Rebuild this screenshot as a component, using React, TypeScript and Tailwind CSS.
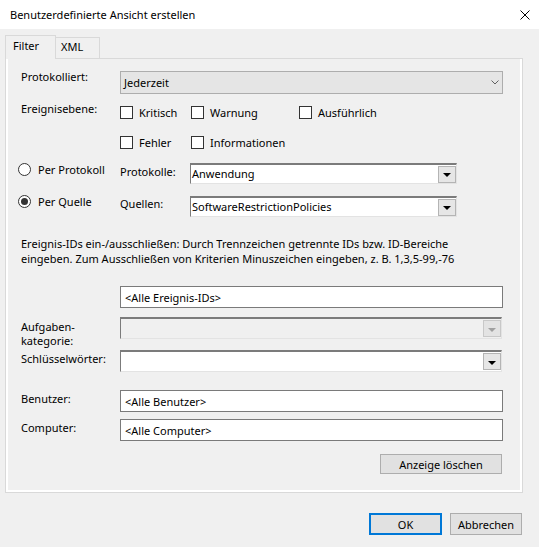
import React from "react";

function Checkbox({ label, className = "" }: { label: string; className?: string }) {
  return (
    <div className={"flex items-center " + className}>
      <div className="w-[13px] h-[13px] border border-[#333333] bg-white shrink-0" />
      <span className="ml-[6px] whitespace-nowrap">{label}</span>
    </div>
  );
}

function Radio({ label, checked = false }: { label: string; checked?: boolean }) {
  return (
    <div className="flex items-center -ml-[3px]">
      <div className="w-[13px] h-[13px] rounded-full border border-[#333333] bg-white flex items-center justify-center shrink-0">
        {checked && <div className="w-[7px] h-[7px] rounded-full bg-[#333333]" />}
      </div>
      <span className="ml-[7px] whitespace-nowrap">{label}</span>
    </div>
  );
}

function ClassicCombo({
  value = "",
  className = "",
  disabled = false,
}: {
  value?: string;
  className?: string;
  disabled?: boolean;
}) {
  return (
    <div
      className={
        "flex items-center border-t-2 border-l border-r border-b border-t-[#7b7b7b] border-l-[#7b7b7b] border-r-[#e3e3e3] border-b-[#e3e3e3] " +
        (disabled ? "bg-[#f0f0f0] " : "bg-white ") +
        className
      }
    >
      <span className="flex-1 pl-[1px] -mt-[1px] whitespace-nowrap overflow-hidden">{value}</span>
      <div
        className={
          "w-[18px] h-[17px] flex items-center justify-center border shrink-0 " +
          (disabled ? "border-[#c8c8c8] bg-[#e3e3e3]" : "border-[#b4b4b4] bg-[#e6e6e6]")
        }
      >
        <div
          className={
            "w-0 h-0 border-l-[4px] border-r-[4px] border-t-[4px] border-l-transparent border-r-transparent mt-[2px] " +
            (disabled ? "border-t-[#a0a0a0]" : "border-t-black")
          }
        />
      </div>
    </div>
  );
}

function TextBox({ value, className = "" }: { value: string; className?: string }) {
  return (
    <div className={"flex items-center bg-white border border-[#7a7a7a] pl-[4px] whitespace-nowrap " + className}>
      {value}
    </div>
  );
}

export default function App() {
  return (
    <div className="w-[539px] h-[547px] bg-[#f0f0f0] font-['Noto_Sans',sans-serif] text-[11px] leading-[15px] text-black flex flex-col overflow-hidden">
      {/* Title bar */}
      <div className="h-[29px] bg-white flex items-center justify-between shrink-0">
        <span className="pl-[10px]">Benutzerdefinierte Ansicht erstellen</span>
        <svg className="mr-[9px]" width="10" height="10" viewBox="0 0 10 10">
          <path d="M0.5 0.5 L9.5 9.5 M9.5 0.5 L0.5 9.5" stroke="#000" strokeWidth="1" fill="none" />
        </svg>
      </div>

      {/* Tabs */}
      <div className="mt-[6px] flex items-end h-[23px] pl-[5px] relative z-10 shrink-0">
        <div className="w-[51px] h-[24px] -mb-px border border-b-0 border-[#d9d9d9] bg-[#f0f0f0] pl-[7px] pt-[2px]">
          Filter
        </div>
        <div className="w-[44px] h-[21px] border-t border-r border-[#d9d9d9] pl-[5px] pt-[1px]">XML</div>
      </div>

      {/* Panel */}
      <div className="ml-[5px] w-[518px] h-[435px] shrink-0 border border-[#d9d9d9] bg-[#f0f0f0] shadow-[inset_2px_0_0_#ffffff,inset_-2px_0_0_#ffffff,inset_0_-2px_0_#ffffff] pl-[15px] pt-[12px] flex flex-col">
        {/* Protokolliert */}
        <div className="flex h-[23px]">
          <div className="w-[99px] -mt-[2px]">Protokolliert:</div>
          <div className="w-[383px] h-[23px] bg-[#e5e5e5] border border-[#adadad] flex items-center justify-between pl-[3px] pr-[3px]">
            <span>Jederzeit</span>
            <svg width="8" height="5" viewBox="0 0 8 5">
              <path d="M0.5 0.5 L4 4 L7.5 0.5" stroke="#606060" strokeWidth="1" fill="none" />
            </svg>
          </div>
        </div>

        {/* Ereignisebene row 1 */}
        <div className="flex h-[20px] mt-[8px] items-center">
          <div className="w-[99px] self-start -mt-[1px]">Ereignisebene:</div>
          <Checkbox label="Kritisch" className="w-[71px]" />
          <Checkbox label="Warnung" className="w-[108px]" />
          <Checkbox label="Ausführlich" />
        </div>

        {/* Ereignisebene row 2 */}
        <div className="flex h-[20px] mt-[10px] items-center">
          <div className="w-[99px]" />
          <Checkbox label="Fehler" className="w-[71px]" />
          <Checkbox label="Informationen" />
        </div>

        {/* Per Protokoll */}
        <div className="flex h-[21px] mt-[11px] items-start">
          <div className="w-[99px] h-[15px] -mt-[1px] flex items-center">
            <Radio label="Per Protokoll" />
          </div>
          <div className="w-[70px] mt-[1px]">Protokolle:</div>
          <ClassicCombo value="Anwendung" className="w-[267px] h-[21px]" />
        </div>

        {/* Per Quelle */}
        <div className="flex h-[21px] mt-[12px] items-start">
          <div className="w-[99px] h-[15px] -mt-[2px] flex items-center">
            <Radio label="Per Quelle" checked />
          </div>
          <div className="w-[70px]">Quellen:</div>
          <ClassicCombo value="SoftwareRestrictionPolicies" className="w-[267px] h-[21px]" />
        </div>

        {/* Description */}
        <div className="mt-[19px] whitespace-nowrap leading-[15px]">
          Ereignis-IDs ein-/ausschließen: Durch Trennzeichen getrennte IDs bzw. ID-Bereiche
          <br />
          eingeben. Zum Ausschließen von Kriterien Minuszeichen eingeben, z. B. 1,3,5-99,-76
        </div>

        {/* Event IDs */}
        <div className="flex mt-[20px] h-[22px]">
          <div className="w-[99px]" />
          <TextBox value="<Alle Ereignis-IDs>" className="w-[383px] h-[22px]" />
        </div>

        {/* Aufgabenkategorie */}
        <div className="flex mt-[9px] h-[22px]">
          <div className="w-[99px] leading-[14px] mt-[3px]">
            Aufgaben-
            <br />
            kategorie:
          </div>
          <ClassicCombo disabled className="w-[382px] h-[22px]" />
        </div>

        {/* Schlüsselwörter */}
        <div className="flex mt-[11px] h-[22px]">
          <div className="w-[99px] mt-[1px]">Schlüsselwörter:</div>
          <ClassicCombo className="w-[382px] h-[22px]" />
        </div>

        {/* Benutzer */}
        <div className="flex mt-[18px] h-[22px]">
          <div className="w-[99px] mt-[1px]">Benutzer:</div>
          <TextBox value="<Alle Benutzer>" className="w-[383px] h-[22px]" />
        </div>

        {/* Computer */}
        <div className="flex mt-[7px] h-[22px]">
          <div className="w-[99px] mt-[1px]">Computer:</div>
          <TextBox value="<Alle Computer>" className="w-[383px] h-[22px]" />
        </div>

        {/* Anzeige löschen */}
        <div className="flex mt-[13px]">
          <div className="ml-[359px] w-[122px] h-[20px] bg-[#e1e1e1] border border-[#adadad] flex items-center justify-center">
            Anzeige löschen
          </div>
        </div>
      </div>

      {/* Bottom buttons */}
      <div className="mt-[20px] flex justify-end gap-[8px] pr-[17px] shrink-0">
        <div className="w-[73px] h-[22px] bg-[#e1e1e1] border-2 border-[#0078d7] flex items-center justify-center">
          OK
        </div>
        <div className="w-[72px] h-[22px] bg-[#e1e1e1] border border-[#adadad] flex items-center justify-center">
          Abbrechen
        </div>
      </div>
    </div>
  );
}
